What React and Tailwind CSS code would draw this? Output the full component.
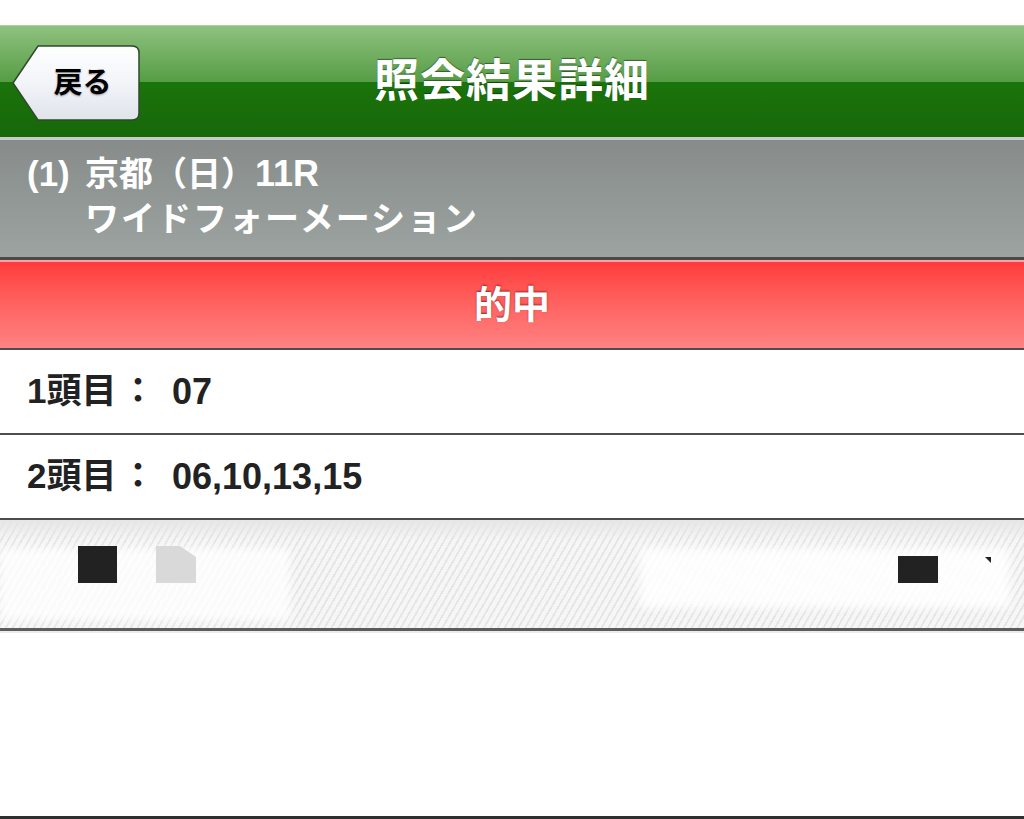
export default function App() {
  const font = { fontFamily: '"Liberation Sans", "Noto Sans CJK JP", sans-serif' };

  return (
    <div className="h-[819px] w-full flex flex-col bg-white overflow-hidden" style={font}>
      {/* status bar gap */}
      <div className="h-[25px] bg-white" />

      {/* Header */}
      <div className="relative h-[112px] flex flex-col border-t border-[#a9d39b]">
        <div className="h-[56px] bg-gradient-to-b from-[#8fc17f] to-[#559d45]" />
        <div className="flex-1 bg-gradient-to-b from-[#1b740b] to-[#176709]" />
        <div className="absolute inset-0 flex items-center justify-center">
          <h1 className="text-white font-bold text-[45px] leading-none tracking-[1px] [text-shadow:0_-1px_1px_rgba(0,0,0,0.45)]">
            照会結果詳細
          </h1>
        </div>
        <button className="absolute left-[12px] top-[18px] w-[129px] h-[78px] flex items-center justify-center">
          <svg className="absolute inset-0" width="129" height="78" viewBox="0 0 129 78">
            <defs>
              <linearGradient id="bk" x1="0" y1="0" x2="0" y2="1">
                <stop offset="0" stopColor="#ffffff" />
                <stop offset="0.5" stopColor="#f2f4f8" />
                <stop offset="1" stopColor="#dfe3ea" />
              </linearGradient>
            </defs>
            <path
              d="M1 39 L26 2 L120 2 Q127 2 127 9 L127 69 Q127 76 120 76 L26 76 Z"
              fill="url(#bk)"
              stroke="#2f4a2a"
              strokeWidth="1.5"
            />
          </svg>
          <span className="relative pl-[12px] text-black font-bold text-[29px] leading-none [text-shadow:0_1px_2px_rgba(0,0,0,0.35)]">
            戻る
          </span>
        </button>
      </div>

      {/* Race info */}
      <div className="h-[3px] bg-[#c5cccb]" />
      <div className="h-[117px] bg-gradient-to-b from-[#878c8a] to-[#9ca3a0] pl-[27px] pt-[12px] text-white font-bold">
        <div className="text-[34px] leading-[44px] flex items-baseline">
          <span className="w-[58px] text-[35px]">(1)</span>
          <span>京都（日）<span className="text-[36px]">11R</span></span>
        </div>
        <div className="text-[34px] leading-[46px] pl-[58px] tracking-[2px]">ワイドフォーメーション</div>
      </div>
      <div className="h-[3px] bg-[#4a4a4a]" />

      {/* Result */}
      <div className="h-[88px] flex flex-col">
        <div className="h-[2px] bg-[#ffa2a2]" />
        <div className="flex-1 bg-gradient-to-b from-[#ff3a3c] to-[#ff8282] flex items-center justify-center">
          <span className="text-white font-bold text-[38px] leading-none [text-shadow:0_-1px_2px_rgba(80,0,0,0.6)]">
            的中
          </span>
        </div>
      </div>
      <div className="h-[2px] bg-[#4d4d4d]" />

      {/* Rows */}
      <div className="h-[83px] flex items-center pl-[27px] text-[#222] font-bold text-[35px]">
        <span className="w-[145px] flex items-center">1頭目<span className="pl-[4px]">：</span></span>
        <span className="text-[36px]">07</span>
      </div>
      <div className="h-[2px] bg-[#4d4d4d]" />
      <div className="h-[83px] flex items-center pl-[27px] text-[#222] font-bold text-[35px]">
        <span className="w-[145px] flex items-center">2頭目<span className="pl-[4px]">：</span></span>
        <span className="text-[36px]">06,10,13,15</span>
      </div>
      <div className="h-[2px] bg-[#4d4d4d]" />

      {/* Banner strip */}
      <div className="relative h-[108px] bg-[repeating-linear-gradient(120deg,#f6f6f6_0px,#f6f6f6_4px,#e6e6e6_4px,#e6e6e6_6px)]">
        <div className="absolute inset-x-0 top-0 h-[20px] bg-gradient-to-b from-[#e6e6e6] to-transparent" />
        <div className="absolute left-0 top-[28px] w-[290px] h-[72px] bg-white/80 blur-[4px]" />
        <div className="absolute left-[640px] top-[28px] w-[370px] h-[60px] bg-white/85 blur-[4px]" />
        <div className="absolute left-[78px] top-[26px] w-[39px] h-[37px] bg-[#222]" />
        <div className="absolute left-[156px] top-[26px] w-[40px] h-[37px] bg-[#d9d9d9] [clip-path:polygon(0_0,60%_0,100%_30%,100%_100%,0_100%)]" />
        <div className="absolute left-[898px] top-[36px] w-[40px] h-[27px] bg-[#222]" />
        <div className="absolute left-[985px] top-[37px] w-0 h-0 border-l-[6px] border-l-transparent border-t-[6px] border-t-[#222]" />
      </div>
      <div className="h-[3px] bg-[#5c5c5c]" />
      <div className="h-[2px] bg-[#ececec]" />

      <div className="flex-1 bg-white" />
      <div className="h-[3px] bg-[#2f2f2f]" />
    </div>
  );
}
